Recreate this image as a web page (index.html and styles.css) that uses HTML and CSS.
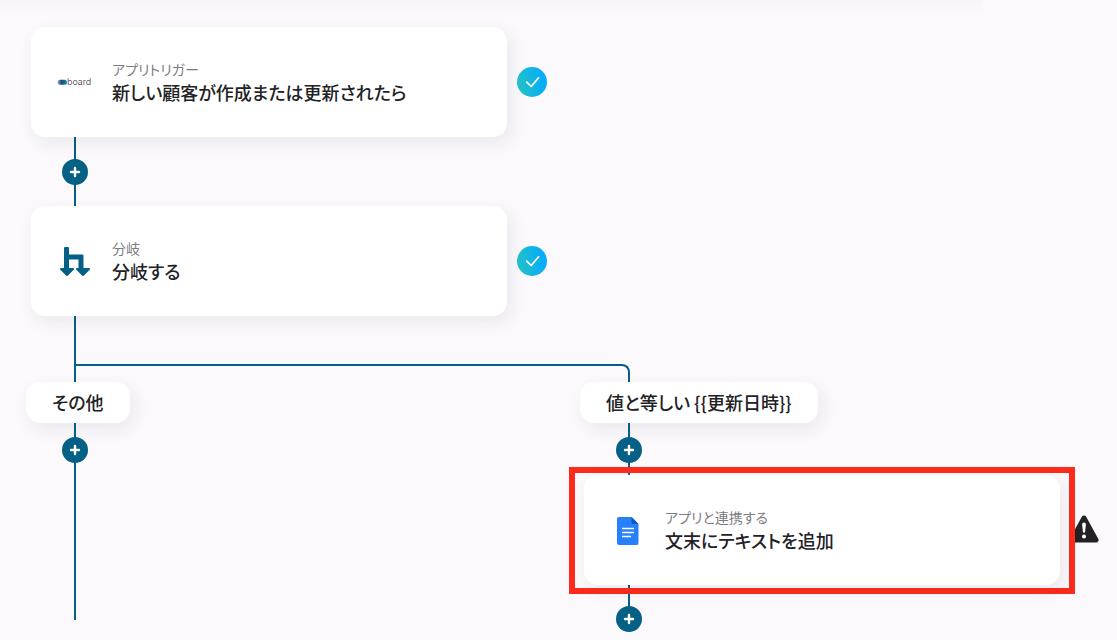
FILE: index.html
```html
<!DOCTYPE html>
<html lang="ja">
<head>
<meta charset="utf-8">
<meta name="viewport" content="width=device-width, initial-scale=1">
<title>フロー</title>
<link rel="stylesheet" href="styles.css">
</head>
<body>
<svg class="defs" width="0" height="0" aria-hidden="true">
  <defs>
    <linearGradient id="check-fill" x1="0" y1="0.6" x2="1" y2="0.4">
      <stop offset="0.1" stop-color="#20bfca"/>
      <stop offset="0.9" stop-color="#05acfb"/>
    </linearGradient>
    <linearGradient id="logo-fill">
      <stop offset="0" stop-color="#b5b5ba"/>
      <stop offset="0.4" stop-color="#174a78"/>
      <stop offset="1" stop-color="#1784cc"/>
    </linearGradient>
    <symbol id="check" viewBox="0 0 30 30">
      <circle cx="15" cy="15" r="15" fill="url(#check-fill)"/>
      <path d="M9.7 15.2 14.2 19.5 21.6 10.8" fill="none" stroke="#fff" stroke-width="1.7" stroke-linecap="round" stroke-linejoin="round"/>
    </symbol>
    <symbol id="plus" viewBox="0 0 26 26">
      <path d="M13 9v8M9 13h8" fill="none" stroke="#fff" stroke-width="2.4" stroke-linecap="round"/>
    </symbol>
  </defs>
</svg>
<main class="flow">
  <div class="step">
    <article class="card">
      <svg class="card-icon" viewBox="0 0 36 36" role="img" aria-label="board">
        <rect x="0.5" y="15.700" width="9.500" height="5" rx="2.500" fill="url(#logo-fill)"/>
        <text class="logo-text" x="10" y="20.700">board</text>
      </svg>
      <div class="card-text">
        <p class="card-kind">アプリトリガー</p>
        <h2 class="card-title">新しい顧客が作成または更新されたら</h2>
      </div>
    </article>
    <svg class="status" role="img" aria-label="完了"><use href="#check"/></svg>
  </div>

  <div class="connector connector-long">
    <button class="add" type="button" aria-label="追加"><svg class="add-icon"><use href="#plus"/></svg></button>
  </div>

  <div class="step">
    <article class="card">
      <svg class="card-icon" viewBox="0 0 36 36" aria-hidden="true">
        <g fill="#046185" stroke="#046185" stroke-linejoin="round">
          <path d="M8 5h3v7.500h14.500V26h-3V15.500H11V26H8z" stroke-width="2"/>
          <path d="M4 26h12l-6 6zM20 26h12l-6 6z" stroke-width="2"/>
        </g>
      </svg>
      <div class="card-text">
        <p class="card-kind">分岐</p>
        <h2 class="card-title">分岐する</h2>
      </div>
    </article>
    <svg class="status" role="img" aria-label="完了"><use href="#check"/></svg>
  </div>

  <div class="connector connector-stem"></div>
  <div class="rail"></div>

  <div class="branches">
    <section class="branch">
      <h3 class="pill">その他</h3>
      <div class="connector connector-short">
        <button class="add" type="button" aria-label="追加"><svg class="add-icon"><use href="#plus"/></svg></button>
      </div>
      <div class="connector connector-tail"></div>
    </section>

    <section class="branch">
      <h3 class="pill">値と等しい {{更新日時}}</h3>
      <div class="connector connector-short">
        <button class="add" type="button" aria-label="追加"><svg class="add-icon"><use href="#plus"/></svg></button>
      </div>
      <div class="selected-step">
        <div class="highlight">
          <article class="card">
            <svg class="card-icon" viewBox="0 0 36 36" aria-hidden="true">
              <path d="M9 5h12.500l7 7V31a2 2 0 0 1-2 2H9a2 2 0 0 1-2-2V7a2 2 0 0 1 2-2z" fill="#2680fc"/>
              <path d="M21.500 5l7 7h-5a2 2 0 0 1-2-2z" fill="#0b57cc"/>
              <path d="M12 16.500h12M12 20.500h12M12 24.500h9" stroke="#fff" stroke-width="1.500"/>
            </svg>
            <div class="card-text">
              <p class="card-kind">アプリと連携する</p>
              <h2 class="card-title">文末にテキストを追加</h2>
            </div>
          </article>
        </div>
        <svg class="warning" viewBox="0 0 30 28" role="img" aria-label="警告">
          <path d="M15 3 27 25H3z" fill="#222126" stroke="#222126" stroke-width="5" stroke-linejoin="round"/>
          <path d="M13.100 9.500a1.900 1.900 0 0 1 3.800 0L16 17.500h-2z" fill="#fff"/>
          <circle cx="15" cy="21.500" r="2" fill="#fff"/>
        </svg>
      </div>
      <div class="connector connector-end">
        <button class="add" type="button" aria-label="追加"><svg class="add-icon"><use href="#plus"/></svg></button>
      </div>
    </section>
  </div>
</main>
</body>
</html>
```
FILE: styles.css
```css
:root {
  --teal: #046185;
  --ink: #222126;
  --shadow: 4px 6px 18px rgba(40, 35, 45, 0.08);
}

* {
  box-sizing: border-box;
}

body {
  margin: 0;
  min-height: 100vh;
  overflow: hidden;
  color: var(--ink);
  background: linear-gradient(#f7f5f8, #fbf9fc) no-repeat 0 0 / 88% 14px, #fbf9fc;
  font-family: "Noto Sans CJK JP", sans-serif;
  font-feature-settings: "palt";
}

h2,
h3,
p {
  margin: 0;
}

.defs {
  position: absolute;
}

.flow {
  padding: 27px 0 0 31px;
}

.step,
.selected-step {
  display: flex;
  align-items: center;
}

.step {
  gap: 10px;
}

.card {
  display: flex;
  align-items: center;
  gap: 19px;
  width: 476px;
  min-height: 110px;
  padding: 0 26px;
  background: #fff;
  border-radius: 14px;
  box-shadow: var(--shadow);
}

.card-icon {
  flex: none;
  width: 36px;
  height: 36px;
}

.logo-text {
  font: 300 9px Inter, sans-serif;
  fill: #333238;
}

.card-text {
  padding-bottom: 2px;
}

.card-kind {
  color: #7d7c82;
  font-size: 14px;
  font-weight: 400;
  line-height: 22px;
}

.card-title {
  font-size: 18px;
  font-weight: 500;
  line-height: 24px;
}

.status {
  flex: none;
  width: 30px;
  height: 30px;
}

.connector {
  display: flex;
  align-items: center;
  justify-content: center;
  width: 88px;
  background: linear-gradient(var(--teal), var(--teal)) no-repeat center / 2px 100%;
}

.connector-long {
  height: 69px;
}

.connector-stem {
  height: 48px;
}

.connector-short {
  height: 54px;
}

.connector-tail {
  height: 143px;
}

.connector-end {
  align-items: flex-end;
  height: 47px;
}

.add {
  display: flex;
  width: 26px;
  height: 26px;
  padding: 0;
  border: 0;
  border-radius: 50%;
  background: var(--teal);
  cursor: pointer;
}

.add-icon {
  width: 26px;
  height: 26px;
}

.rail {
  width: 556px;
  height: 18px;
  margin-left: 43px;
  border: solid var(--teal);
  border-width: 2px 2px 0;
  border-top-right-radius: 8px;
}

.branches {
  display: grid;
  grid-template-columns: 554px 1fr;
}

.pill {
  width: max-content;
  margin-left: -5px;
  padding: 8px 26px;
  background: #fff;
  border-radius: 14px;
  box-shadow: var(--shadow);
  font-size: 18px;
  font-weight: 500;
  line-height: 25px;
}

.selected-step {
  margin: -10px 0 -9px -16px;
}

.highlight {
  position: relative;
  z-index: 1;
  padding: 2px 9px 3px;
  border: 6px solid #fd2b1b;
}

.warning {
  flex: none;
  width: 30px;
  height: 28px;
  margin: 0 0 4px -6px;
}
```
